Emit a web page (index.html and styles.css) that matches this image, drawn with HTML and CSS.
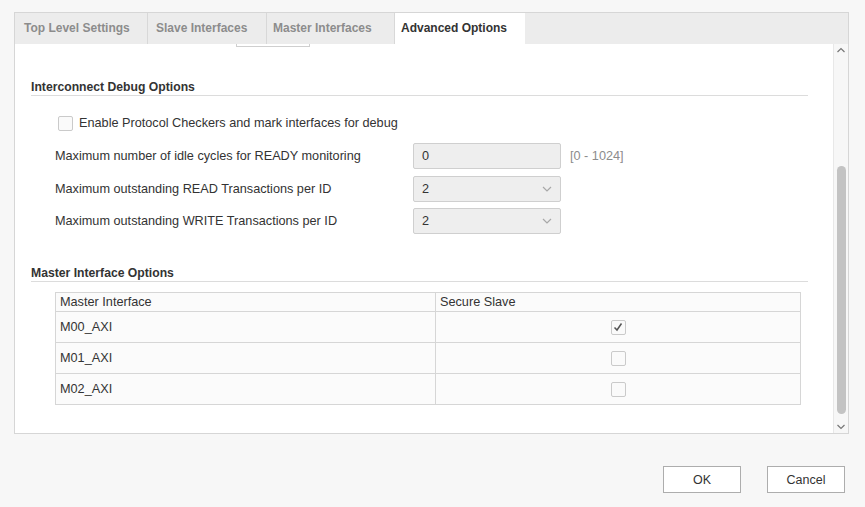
FILE: index.html
```html
<!DOCTYPE html>
<html>
<head>
<meta charset="utf-8">
<link rel="stylesheet" href="styles.css">
</head>
<body>
<div class="dialog">
  <div class="panel">
    <div class="tabs">
      <div class="tab t1">Top Level Settings</div>
      <div class="tab t2">Slave Interfaces</div>
      <div class="tab t3">Master Interfaces</div>
      <div class="tab t4 active">Advanced Options</div>
    </div>
    <div class="body">
      <div class="content">
        <div class="stub"></div>
        <div class="heading h1">Interconnect Debug Options</div>
        <label class="check-row">
          <span class="cb"></span>
          <span>Enable Protocol Checkers and mark interfaces for debug</span>
        </label>
        <div class="params">
          <div class="plabel">Maximum number of idle cycles for READY monitoring</div>
          <div class="field input">0</div>
          <div class="hint">[0 - 1024]</div>
          <div class="plabel">Maximum outstanding READ Transactions per ID</div>
          <div class="field select">2<svg class="chev" width="10" height="6" viewBox="0 0 10 6"><path d="M1 1 L5 5 L9 1" fill="none" stroke="#a8a8a8" stroke-width="1.2"/></svg></div>
          <div class="hint"></div>
          <div class="plabel">Maximum outstanding WRITE Transactions per ID</div>
          <div class="field select">2<svg class="chev" width="10" height="6" viewBox="0 0 10 6"><path d="M1 1 L5 5 L9 1" fill="none" stroke="#a8a8a8" stroke-width="1.2"/></svg></div>
          <div class="hint"></div>
        </div>
        <div class="heading h2">Master Interface Options</div>
        <table class="grid">
          <thead>
            <tr><th class="c1">Master Interface</th><th class="c2">Secure Slave</th></tr>
          </thead>
          <tbody>
            <tr><td>M00_AXI</td><td class="center"><span class="cb checked"><svg width="12" height="12" viewBox="0 0 12 12"><path d="M2.5 6.5 L5 9 L9.5 2.5" fill="none" stroke="#555" stroke-width="1.5"/></svg></span></td></tr>
            <tr><td>M01_AXI</td><td class="center"><span class="cb"></span></td></tr>
            <tr><td>M02_AXI</td><td class="center"><span class="cb"></span></td></tr>
          </tbody>
        </table>
      </div>
      <div class="scrollbar">
        <svg class="arrow" width="10" height="6" viewBox="0 0 10 6"><path d="M1.5 5 L5 1.5 L8.5 5" fill="none" stroke="#777" stroke-width="1.2"/></svg>
        <div class="track"><div class="thumb"></div></div>
        <svg class="arrow" width="10" height="6" viewBox="0 0 10 6"><path d="M1.5 1 L5 4.5 L8.5 1" fill="none" stroke="#777" stroke-width="1.2"/></svg>
      </div>
    </div>
  </div>
  <div class="footer">
    <button class="btn">OK</button>
    <button class="btn">Cancel</button>
  </div>
</div>
</body>
</html>
```
FILE: styles.css
```css
* { box-sizing: border-box; }
html, body { margin: 0; padding: 0; }
body {
  background: #f7f7f7;
  font-family: "Liberation Sans", Arial, sans-serif;
  font-size: 12.7px;
  color: #333;
  width: 865px;
  height: 507px;
  overflow: hidden;
}
.dialog { padding: 12px 0 0 14px; }
.panel {
  width: 835px;
  height: 422px;
  border: 1px solid #d6d6d6;
  display: flex;
  flex-direction: column;
  background: #fff;
}
.tabs {
  height: 31px;
  background: #ececec;
  display: flex;
  flex: none;
  font-size: 12px;
}
.tab {
  height: 31px;
  line-height: 31px;
  font-weight: bold;
  color: #8c8c8c;
  padding: 0 0 0 8px;
  border-right: 1px solid #d8d8d8;
  white-space: nowrap;
}
.t1 { width: 133px; padding-left: 9px; }
.t2 { width: 119px; }
.t3 { width: 128px; padding-left: 6px; }
.t4 { width: 130px; padding-left: 6px; }
.tab.active { background: #fff; color: #333; border-right: none; }
.body {
  flex: 1;
  display: flex;
  min-height: 0;
}
.content {
  flex: 1;
  overflow: hidden;
  background: #fff;
}
.stub {
  margin-left: 221px;
  width: 74px;
  height: 3px;
  border: 1px solid #cfcfcf;
  border-top: none;
}
.heading {
  margin: 0 25px 0 16px;
  font-weight: bold;
  font-size: 12.2px;
  line-height: 16px;
  border-bottom: 1px solid #dcdcdc;
  color: #333;
}
.h1 { margin-top: 32px; }
.h2 { margin-top: 31px; }
.check-row {
  display: flex;
  align-items: center;
  gap: 6px;
  margin: 19px 0 0 43px;
  height: 16px;
  line-height: 16px;
}
.cb {
  display: inline-flex;
  align-items: center;
  justify-content: center;
  width: 15px;
  height: 15px;
  border: 1px solid #cacaca;
  border-radius: 2px;
  background: #fafafa;
  flex: none;
}
.params {
  display: grid;
  grid-template-columns: 358px 148px auto;
  grid-auto-rows: 26px;
  row-gap: 6.5px;
  margin: 12px 0 0 40px;
  align-items: center;
}
.field {
  height: 26px;
  border: 1px solid #cfcfcf;
  background: #eeeeee;
  border-radius: 2px;
  padding: 0 8px;
  line-height: 24px;
  display: flex;
  align-items: center;
  justify-content: space-between;
}
.hint { color: #8c8c8c; padding-left: 9px; }
.grid {
  margin: 10px 0 0 40px;
  width: 746px;
  border-collapse: collapse;
  border: 1px solid #d0d0d0;
}
.grid th, .grid td {
  border: 1px solid #d6d6d6;
  font-weight: normal;
  text-align: left;
  padding: 0 4px;
  background: #fbfbfb;
}
.grid th { height: 19px; line-height: 17px; }
.grid td { height: 31px; }
.grid .c1 { width: 380px; }
.grid td.center { text-align: center; }
.grid td.center .cb { vertical-align: middle; }
.scrollbar {
  width: 15px;
  flex: none;
  background: #f7f7f7;
  border-left: 1px solid #e8e8e8;
  display: flex;
  flex-direction: column;
  align-items: center;
  padding: 3px 0 3px;
}
.arrow { flex: none; }
.track {
  flex: 1;
  width: 100%;
  padding-top: 113px;
  padding-bottom: 7px;
  display: flex;
  justify-content: center;
}
.thumb {
  width: 9px;
  height: 248px;
  background: #c3c3c3;
  border-radius: 5px;
}
.footer {
  display: flex;
  justify-content: flex-end;
  gap: 26px;
  padding: 32px 20px 0 0;
}
.btn {
  width: 78px;
  height: 27px;
  background: #fff;
  border: 1px solid #adadad;
  font-family: "Liberation Sans", Arial, sans-serif;
  font-size: 12.5px;
  color: #333;
  padding: 0;
}
```
